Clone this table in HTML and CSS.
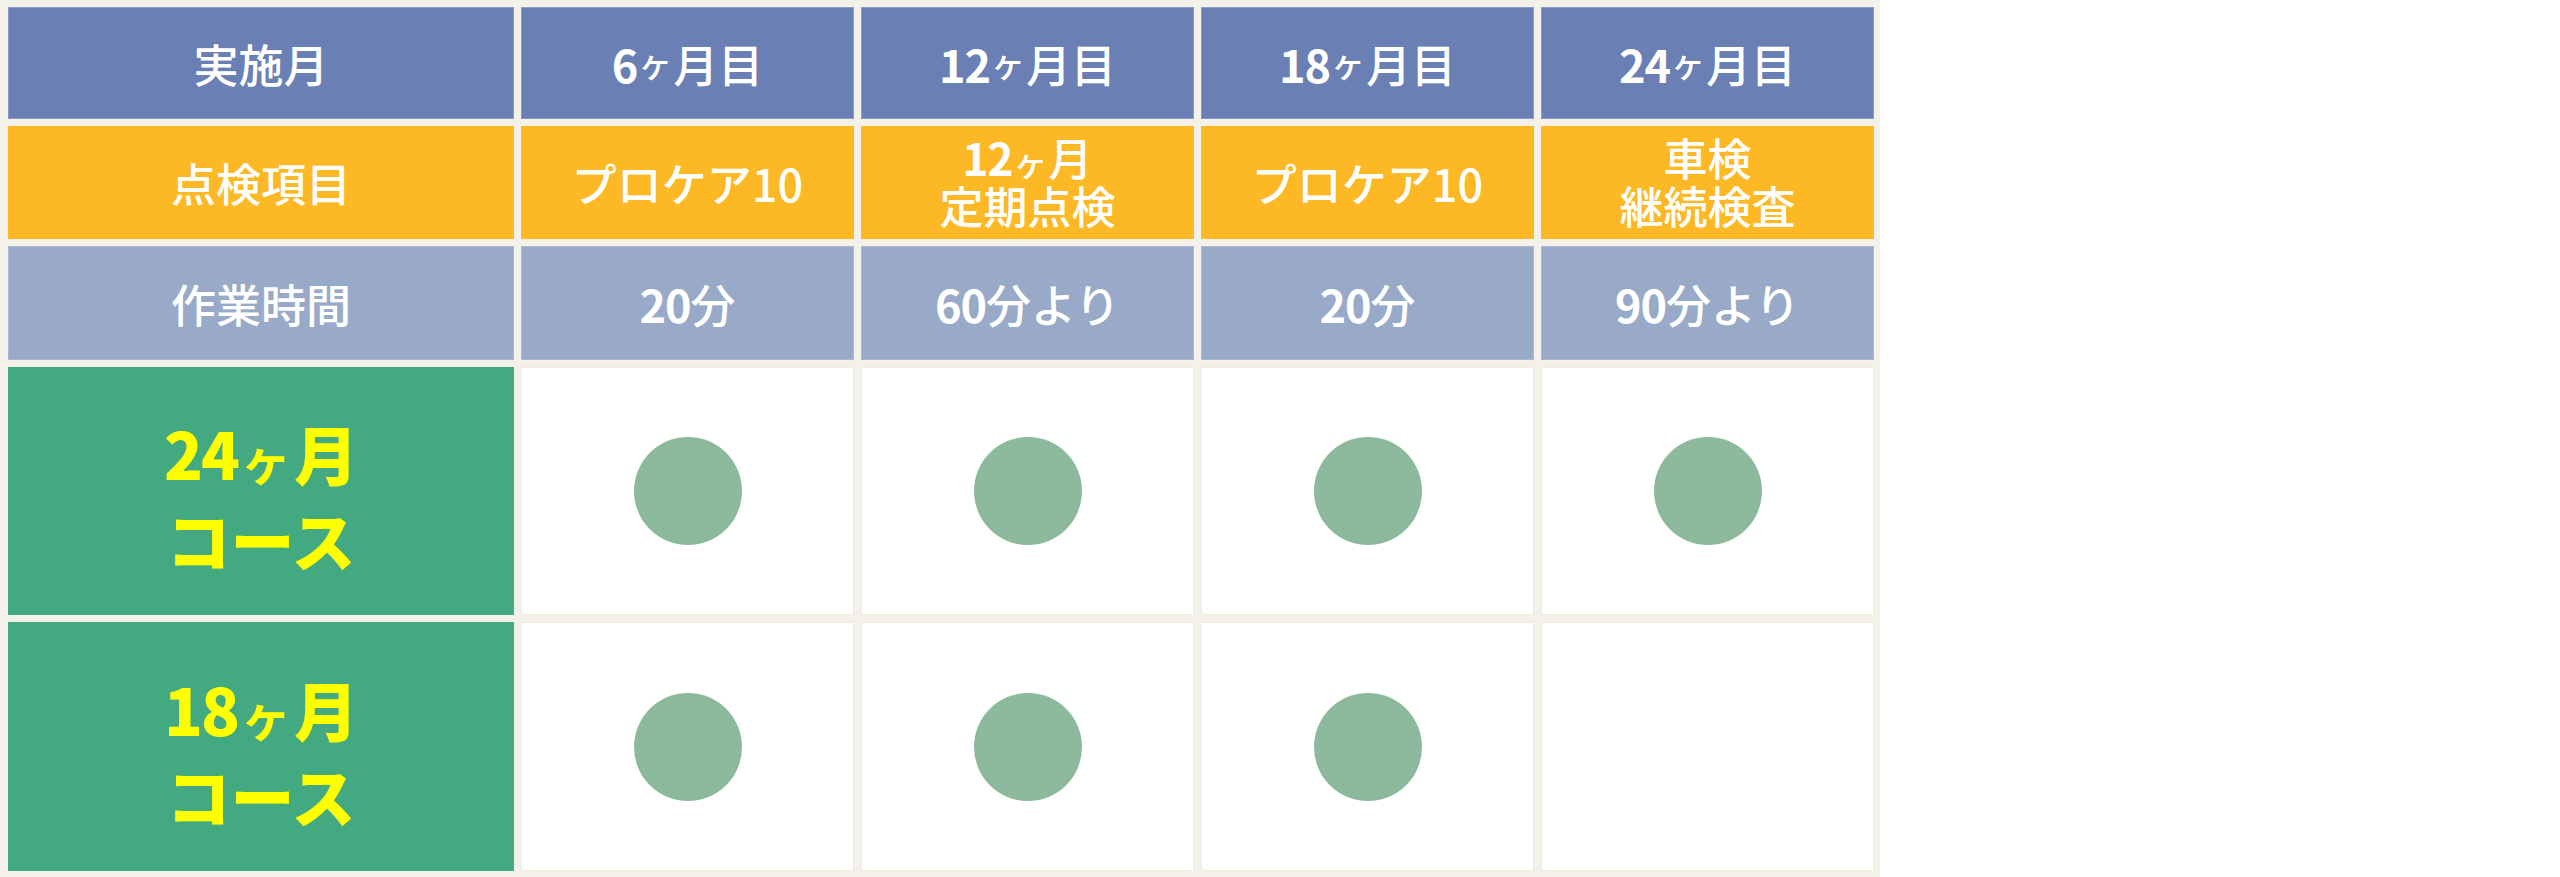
FILE: index.html
```html
<!DOCTYPE html>
<html lang="ja">
<head>
<meta charset="utf-8">
<title>点検スケジュール</title>
<link rel="stylesheet" href="styles.css">
</head>
<body>
<div class="table">
  <div class="cell head">実施月</div>
  <div class="cell head"><span class="num">6</span><span class="ke">ヶ</span>月目</div>
  <div class="cell head"><span class="num">12</span><span class="ke">ヶ</span>月目</div>
  <div class="cell head"><span class="num">18</span><span class="ke">ヶ</span>月目</div>
  <div class="cell head"><span class="num">24</span><span class="ke">ヶ</span>月目</div>

  <div class="cell item">点検項目</div>
  <div class="cell item">プロケア10</div>
  <div class="cell item two"><span class="line"><span class="num">12</span><span class="ke">ヶ</span>月</span><span class="line">定期点検</span></div>
  <div class="cell item">プロケア10</div>
  <div class="cell item two"><span class="line">車検</span><span class="line">継続検査</span></div>

  <div class="cell time">作業時間</div>
  <div class="cell time"><span class="num">20</span>分</div>
  <div class="cell time"><span class="num">60</span>分より</div>
  <div class="cell time"><span class="num">20</span>分</div>
  <div class="cell time"><span class="num">90</span>分より</div>

  <div class="cell course"><span><span class="cnum">24</span><span class="cke">ヶ</span>月</span><span>コース</span></div>
  <div class="cell mark"><span class="dot"></span></div>
  <div class="cell mark"><span class="dot"></span></div>
  <div class="cell mark"><span class="dot"></span></div>
  <div class="cell mark"><span class="dot"></span></div>

  <div class="cell course"><span><span class="cnum">18</span><span class="cke">ヶ</span>月</span><span>コース</span></div>
  <div class="cell mark"><span class="dot"></span></div>
  <div class="cell mark"><span class="dot"></span></div>
  <div class="cell mark"><span class="dot"></span></div>
  <div class="cell mark"></div>
</div>
</body>
</html>
```

FILE: styles.css
```css
html, body {
  margin: 0;
  padding: 0;
  background: #ffffff;
}

body {
  font-family: "Noto Sans CJK JP", "Noto Sans", sans-serif;
}

.table {
  width: 1880px;
  height: 877px;
  box-sizing: border-box;
  padding: 7px 6px 6px 8px;
  background: #f4f1ea;
  display: grid;
  grid-template-columns: 506px repeat(4, 333px);
  grid-template-rows: 112px 113px 114px 248px 249px;
  column-gap: 7px;
  row-gap: 7px;
}

.cell {
  display: flex;
  align-items: center;
  justify-content: center;
  box-sizing: border-box;
  color: #ffffff;
  font-size: 45px;
  font-weight: 500;
  line-height: 1;
  letter-spacing: 0;
}

.head {
  background: #6a80b4;
  border: 1px solid #8b9cc6;
}

.item {
  background: #fdb826;
}

.time {
  background: #98aac7;
  border: 1px solid #aab8d1;
}

.two {
  flex-direction: column;
  padding-bottom: 4px;
}

.two .line {
  display: block;
  height: 48px;
  line-height: 48px;
  font-size: 44px;
}

.num {
  font-weight: 700;
  letter-spacing: -1px;
}

.ke {
  font-size: 34px;
  margin: 0 1px;
}

.course {
  background: #42a980;
  color: #ffff00;
  font-size: 64px;
  font-weight: 900;
  flex-direction: column;
  line-height: 80px;
  padding-top: 8px;
}

.cnum {
  letter-spacing: -2px;
}

.cke {
  font-size: 50px;
  font-weight: 700;
  margin: 0 3px;
}

.mark {
  background: #ffffff;
  border: 1px solid #efebe0;
}

.dot {
  display: block;
  width: 108px;
  height: 108px;
  border-radius: 50%;
  background: #8dba9c;
}
```
